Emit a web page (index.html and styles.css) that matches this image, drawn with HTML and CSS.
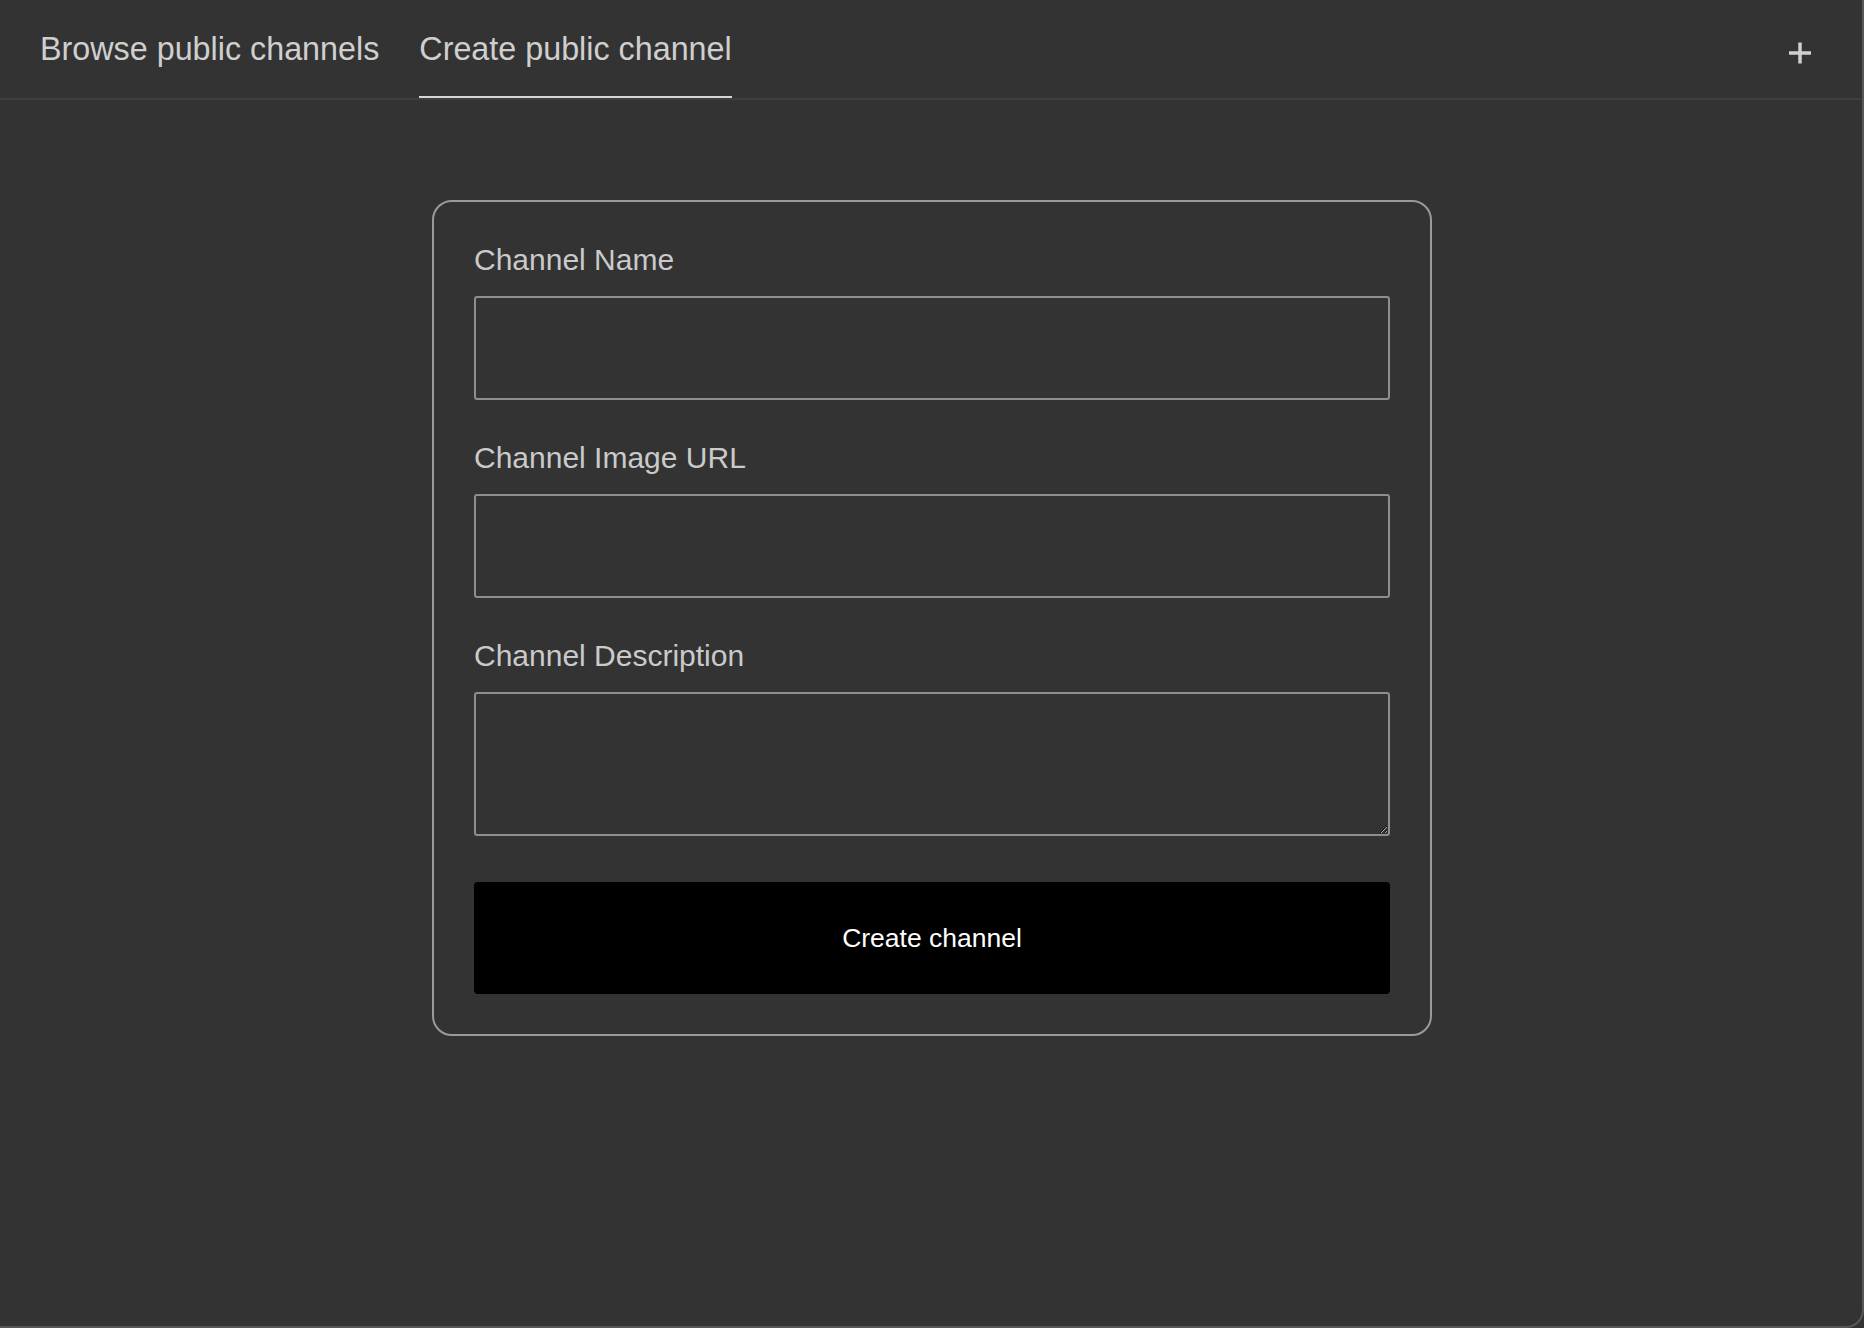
FILE: index.html
```html
<!DOCTYPE html>
<html lang="en">
<head>
<meta charset="utf-8">
<title>Create public channel</title>
<link rel="stylesheet" href="styles.css">
</head>
<body>
<div class="window">
  <header class="tabbar">
    <nav class="tabs">
      <a class="tab">Browse public channels</a>
      <a class="tab tab-active">Create public channel</a>
    </nav>
    <button class="add-btn" aria-label="Add">
      <svg width="24" height="24" viewBox="0 0 24 24"><path d="M12 1.5V22.5M1 12H23" stroke="#cfcfcf" stroke-width="3.5" fill="none"/></svg>
    </button>
  </header>
  <main class="content">
    <form class="card">
      <div class="field">
        <label class="label">Channel Name</label>
        <input class="input" type="text">
      </div>
      <div class="field">
        <label class="label">Channel Image URL</label>
        <input class="input" type="text">
      </div>
      <div class="field">
        <label class="label">Channel Description</label>
        <textarea class="input textarea"></textarea>
      </div>
      <button class="submit" type="button">Create channel</button>
    </form>
  </main>
</div>
</body>
</html>
```

FILE: styles.css
```css
* { box-sizing: border-box; }
html, body {
  margin: 0;
  padding: 0;
  height: 100%;
  background: #333333;
  font-family: "Liberation Sans", Arial, Helvetica, sans-serif;
}
.window {
  height: 100vh;
  background: #333333;
  border-right: 2px solid #575757;
  border-bottom: 2px solid #575757;
  border-bottom-right-radius: 18px;
  display: flex;
  flex-direction: column;
}
.tabbar {
  display: flex;
  align-items: flex-start;
  border-bottom: 2px solid #3e3e3e;
  height: 100px;
  padding-left: 40px;
}
.tabs {
  display: flex;
  gap: 40px;
}
.tab {
  display: block;
  font-size: 32.3px;
  line-height: 36px;
  color: #cfcfcf;
  padding-top: 31px;
  padding-bottom: 29px;
  border-bottom: 2px solid transparent;
  cursor: pointer;
}
.tab-active {
  border-bottom-color: #d6d6d6;
}
.add-btn {
  margin-left: auto;
  margin-right: 50px;
  margin-top: 41px;
  background: none;
  border: 0;
  padding: 0;
  width: 24px;
  height: 24px;
  display: flex;
}
.content {
  flex: 1;
  display: flex;
  justify-content: center;
  padding-top: 100px;
  padding-left: 2px;
}
.card {
  width: 1000px;
  align-self: flex-start;
  border: 2px solid #9a9a9a;
  border-radius: 20px;
  padding: 40px;
  display: flex;
  flex-direction: column;
}
.field {
  display: flex;
  flex-direction: column;
  margin-bottom: 40px;
}
.label {
  font-size: 30px;
  line-height: 36px;
  color: #cacaca;
  margin-bottom: 18px;
}
.input {
  display: block;
  width: 100%;
  height: 104px;
  background: #333333;
  border: 2px solid #8e8e8e;
  border-radius: 3px;
  color: #dddddd;
  font-family: inherit;
  font-size: 28px;
  padding: 8px 12px;
  margin: 0;
  outline: none;
}
.textarea {
  height: 144px;
  resize: vertical;
}
.field:last-of-type {
  margin-bottom: 46px;
}
.submit {
  height: 112px;
  width: 100%;
  background: #000000;
  color: #ffffff;
  border: 0;
  border-radius: 4px;
  font-family: inherit;
  font-size: 26.5px;
  display: flex;
  align-items: center;
  justify-content: center;
  padding: 0;
  cursor: pointer;
}
```
